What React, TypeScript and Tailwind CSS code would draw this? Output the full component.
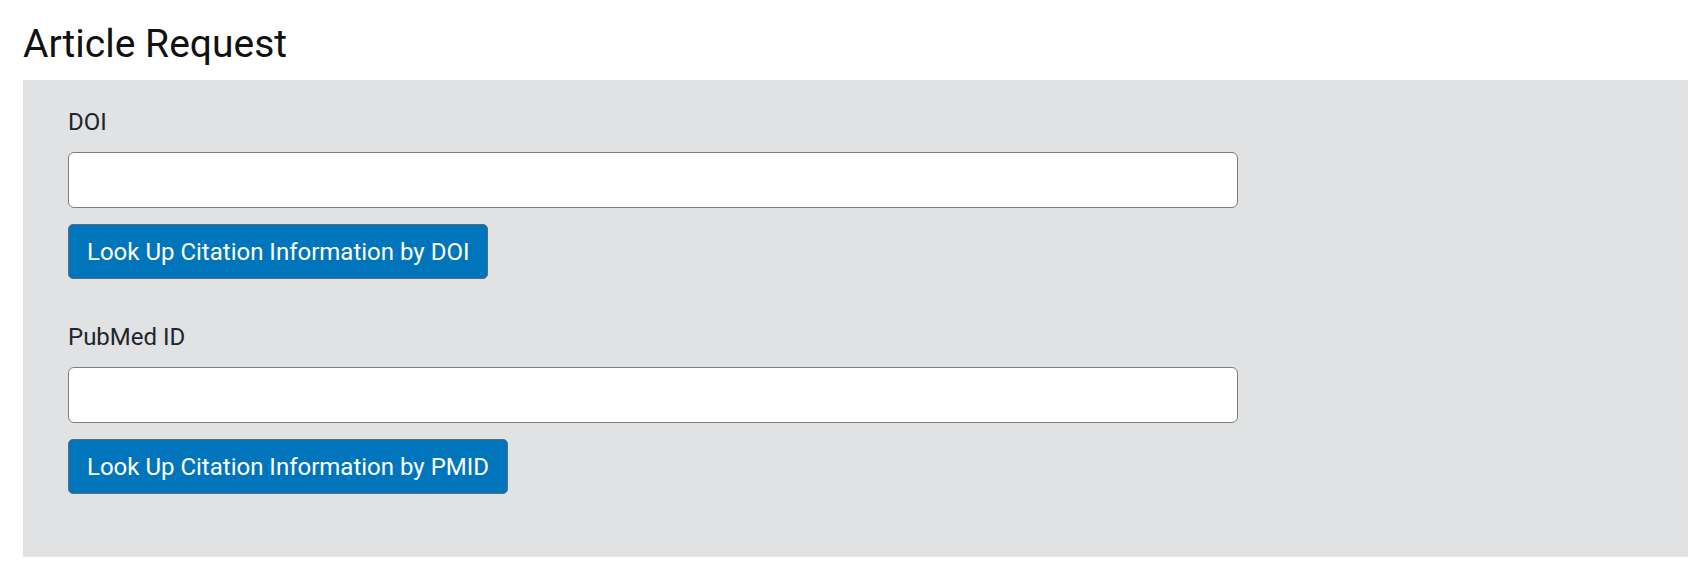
const fields = [
  { label: "DOI", button: "Look Up Citation Information by DOI" },
  { label: "PubMed ID", button: "Look Up Citation Information by PMID" },
];

const App = () => {
  return (
    <div className="min-h-screen bg-white pl-[23px] pr-[20px] pt-[21px] font-['Roboto',sans-serif]">
      <h1 className="mb-[12px] text-[39px] leading-[47px] font-normal text-[#111]">
        Article Request
      </h1>
      <div className="bg-[#e1e2e4] pl-[45px] pt-[24px] pb-[63px]">
        {fields.map((f, i) => (
          <div key={f.label} className={i > 0 ? "mt-[40px]" : ""}>
            <label className="block text-[24px] leading-[36px] text-[#212529] mb-[12px]">
              {f.label}
            </label>
            <input
              type="text"
              className="block h-[56px] w-[1170px] rounded-[6px] border border-[#7d7d7d] bg-white px-3 text-[24px] outline-none"
            />
            <button
              type="button"
              className="mt-[16px] flex h-[55px] items-center rounded-[5px] border border-[#5d6b78] bg-[#0175bc] px-[18px] text-[24px] leading-none text-white"
            >
              {f.button}
            </button>
          </div>
        ))}
      </div>
    </div>
  );
};

export default App;
